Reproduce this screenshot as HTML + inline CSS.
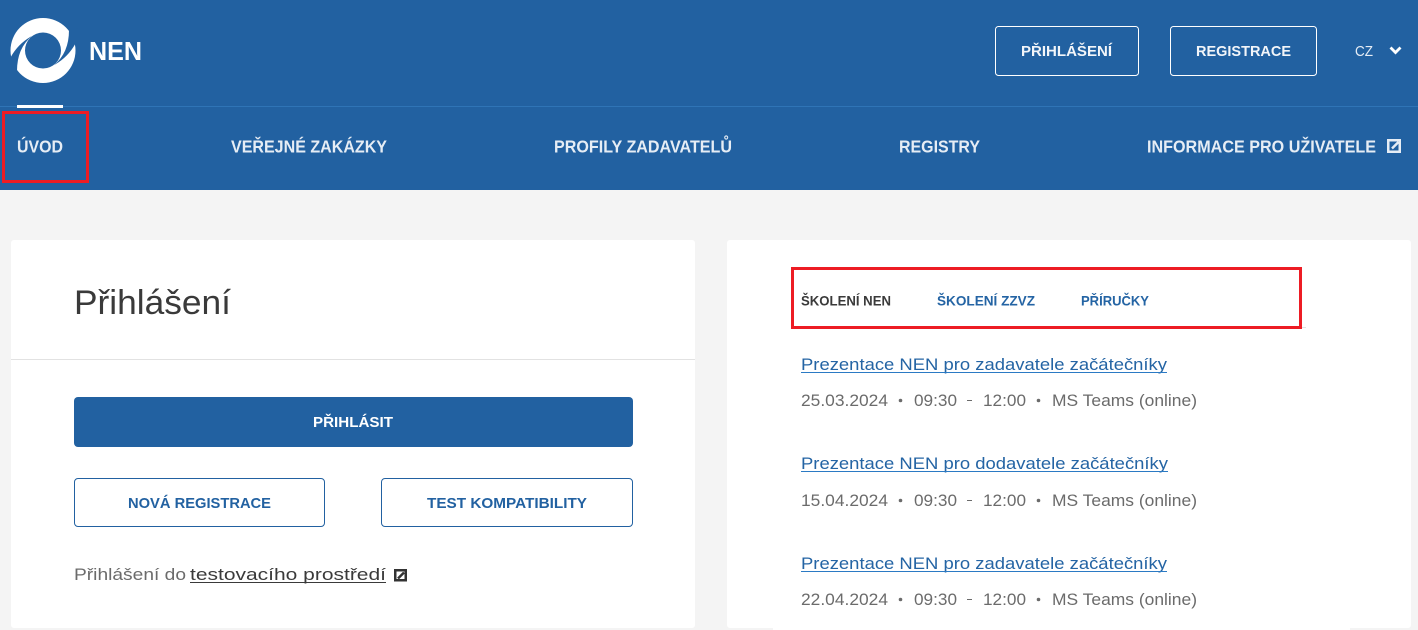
<!DOCTYPE html>
<html lang="cs">
<head>
<meta charset="utf-8">
<title>NEN</title>
<style>
html,body{margin:0;padding:0;background:#f4f4f4;width:1418px;height:630px;overflow:hidden}
svg{display:block}
text{font-family:"Liberation Sans",Arial,sans-serif}
.b{font-weight:700}
.n{fill:#e6edf5;font-weight:700;font-size:17.5px}
.d{fill:#6b6b6b;font-size:17px}
.l{fill:#2464a4;font-size:17px}
</style>
</head>
<body>
<svg width="1418" height="630" viewBox="0 0 1418 630" xmlns="http://www.w3.org/2000/svg">
<rect width="1418" height="630" fill="#f4f4f4"/>
<rect width="1418" height="190" fill="#2261a1"/>
<rect y="106" width="1418" height="1" fill="#2f74b6"/>
<rect x="17" y="105" width="46" height="3" fill="#fff"/>

<!-- logo -->
<path fill-rule="evenodd" fill="#fff" d="M43 18a32.500 32.500 0 1 0 0 65a32.500 32.500 0 1 0 0-65zM43 32.500a18 18 0 1 1 0 36a18 18 0 1 1 0-36z"/>
<path fill="#2261a1" d="M8 59L10.800 57Q18 44 31 36.500L32 36Q17 48 17 71L8 73Z"/>
<path fill="#2261a1" d="M78 42L75.200 44Q68 57 55 64.500L54 65Q69 53 69 30L78 28Z"/>
<text x="89" y="60" class="b" font-size="26" fill="#fff" textLength="53" lengthAdjust="spacingAndGlyphs">NEN</text>

<!-- top buttons -->
<rect x="995.500" y="26.500" width="143" height="49" rx="3" fill="none" stroke="#fff"/>
<text x="1021" y="56" class="b" font-size="15" fill="#f2f5f9" textLength="91" lengthAdjust="spacingAndGlyphs">PŘIHLÁŠENÍ</text>
<rect x="1170.500" y="26.500" width="146" height="49" rx="3" fill="none" stroke="#fff"/>
<text x="1196" y="56" class="b" font-size="15" fill="#f2f5f9" textLength="95" lengthAdjust="spacingAndGlyphs">REGISTRACE</text>
<text x="1355" y="56" font-size="15" fill="#e6edf5" textLength="18" lengthAdjust="spacingAndGlyphs">CZ</text>
<path d="M1390.500 47.500L1395.500 52.500L1400.500 47.500" fill="none" stroke="#fff" stroke-width="2.800"/>

<!-- nav -->
<text x="17" y="152.500" class="n" textLength="46" lengthAdjust="spacingAndGlyphs">ÚVOD</text>
<text x="231" y="152.500" class="n" textLength="156" lengthAdjust="spacingAndGlyphs">VEŘEJNÉ ZAKÁZKY</text>
<text x="554" y="152.500" class="n" textLength="178" lengthAdjust="spacingAndGlyphs">PROFILY ZADAVATELŮ</text>
<text x="899" y="152.500" class="n" textLength="81" lengthAdjust="spacingAndGlyphs">REGISTRY</text>
<text x="1147" y="152.500" class="n" textLength="229" lengthAdjust="spacingAndGlyphs">INFORMACE PRO UŽIVATELE</text>
<rect x="1387" y="139" width="14" height="14" fill="#e6edf5"/>
<rect x="1389.500" y="141.500" width="9" height="9" fill="#2261a1"/>
<path d="M1392 148.500L1398.500 142" stroke="#e6edf5" stroke-width="2.500"/>

<!-- left card -->
<rect x="11" y="240" width="684" height="388" rx="3" fill="#fff"/>
<text x="74" y="314" font-size="34" fill="#3a3a3a" textLength="157" lengthAdjust="spacingAndGlyphs">Přihlášení</text>
<rect x="11" y="359" width="684" height="1" fill="#e2e2e2"/>
<rect x="74" y="397" width="559" height="50" rx="4" fill="#2261a1"/>
<text x="313" y="427" class="b" font-size="15" fill="#fff" textLength="80" lengthAdjust="spacingAndGlyphs">PŘIHLÁSIT</text>
<rect x="74.500" y="478.500" width="250" height="48" rx="3.500" fill="#fff" stroke="#2261a1"/>
<text x="128" y="508" class="b" font-size="15" fill="#2261a1" textLength="143" lengthAdjust="spacingAndGlyphs">NOVÁ REGISTRACE</text>
<rect x="381.500" y="478.500" width="251" height="48" rx="3.500" fill="#fff" stroke="#2261a1"/>
<text x="427" y="508" class="b" font-size="15" fill="#2261a1" textLength="160" lengthAdjust="spacingAndGlyphs">TEST KOMPATIBILITY</text>
<text x="74" y="580" class="d" textLength="112" lengthAdjust="spacingAndGlyphs">Přihlášení do</text>
<text x="190" y="580" font-size="17" fill="#3a3a3a" textLength="196" lengthAdjust="spacingAndGlyphs">testovacího prostředí</text>
<rect x="190" y="582" width="196" height="1" fill="#3a3a3a"/>
<rect x="394" y="569" width="13" height="12.500" fill="#333"/>
<rect x="396.500" y="571.500" width="8" height="7.500" fill="#fff"/>
<path d="M398 578.500L404 572.500" stroke="#333" stroke-width="2.500"/>

<!-- right card -->
<rect x="727" y="240" width="684" height="388" rx="3" fill="#fff"/>
<rect x="773" y="626" width="577" height="4" fill="#fff"/>
<rect x="791" y="327" width="515" height="1" fill="#e2e2e2"/>
<text x="801" y="305.500" class="b" font-size="14" fill="#3a3a3a" textLength="90" lengthAdjust="spacingAndGlyphs">ŠKOLENÍ NEN</text>
<text x="937" y="305.500" class="b" font-size="14" fill="#2464a4" textLength="98" lengthAdjust="spacingAndGlyphs">ŠKOLENÍ ZZVZ</text>
<text x="1081" y="305.500" class="b" font-size="14" fill="#2464a4" textLength="68" lengthAdjust="spacingAndGlyphs">PŘÍRUČKY</text>

<text x="801" y="370" class="l" textLength="366" lengthAdjust="spacingAndGlyphs">Prezentace NEN pro zadavatele začátečníky</text>
<rect x="801" y="372" width="366" height="1" fill="#2b7ac4"/>
<text x="801" y="406" class="d" textLength="87" lengthAdjust="spacingAndGlyphs">25.03.2024</text>
<circle cx="900.500" cy="400.500" r="1.800" fill="#6b6b6b"/>
<text x="914" y="406" class="d" textLength="43" lengthAdjust="spacingAndGlyphs">09:30</text>
<rect x="967" y="400" width="5" height="1" fill="#6b6b6b"/>
<text x="983" y="406" class="d" textLength="43" lengthAdjust="spacingAndGlyphs">12:00</text>
<circle cx="1038.500" cy="400.500" r="1.800" fill="#6b6b6b"/>
<text x="1052" y="406" class="d" textLength="145" lengthAdjust="spacingAndGlyphs">MS Teams (online)</text>

<text x="801" y="469" class="l" textLength="367" lengthAdjust="spacingAndGlyphs">Prezentace NEN pro dodavatele začátečníky</text>
<rect x="801" y="471" width="367" height="1" fill="#2b7ac4"/>
<text x="801" y="506" class="d" textLength="87" lengthAdjust="spacingAndGlyphs">15.04.2024</text>
<circle cx="900.500" cy="500.500" r="1.800" fill="#6b6b6b"/>
<text x="914" y="506" class="d" textLength="43" lengthAdjust="spacingAndGlyphs">09:30</text>
<rect x="967" y="500" width="5" height="1" fill="#6b6b6b"/>
<text x="983" y="506" class="d" textLength="43" lengthAdjust="spacingAndGlyphs">12:00</text>
<circle cx="1038.500" cy="500.500" r="1.800" fill="#6b6b6b"/>
<text x="1052" y="506" class="d" textLength="145" lengthAdjust="spacingAndGlyphs">MS Teams (online)</text>

<text x="801" y="569" class="l" textLength="366" lengthAdjust="spacingAndGlyphs">Prezentace NEN pro zadavatele začátečníky</text>
<rect x="801" y="571" width="366" height="1" fill="#2b7ac4"/>
<text x="801" y="605" class="d" textLength="87" lengthAdjust="spacingAndGlyphs">22.04.2024</text>
<circle cx="900.500" cy="599.500" r="1.800" fill="#6b6b6b"/>
<text x="914" y="605" class="d" textLength="43" lengthAdjust="spacingAndGlyphs">09:30</text>
<rect x="967" y="599" width="5" height="1" fill="#6b6b6b"/>
<text x="983" y="605" class="d" textLength="43" lengthAdjust="spacingAndGlyphs">12:00</text>
<circle cx="1038.500" cy="599.500" r="1.800" fill="#6b6b6b"/>
<text x="1052" y="605" class="d" textLength="145" lengthAdjust="spacingAndGlyphs">MS Teams (online)</text>

<!-- red annotation boxes -->
<rect x="3.500" y="112.500" width="84" height="69" fill="none" stroke="#ed1c24" stroke-width="3"/>
<rect x="792.500" y="268.500" width="508" height="59" fill="none" stroke="#ed1c24" stroke-width="3"/>
</svg>
</body>
</html>
